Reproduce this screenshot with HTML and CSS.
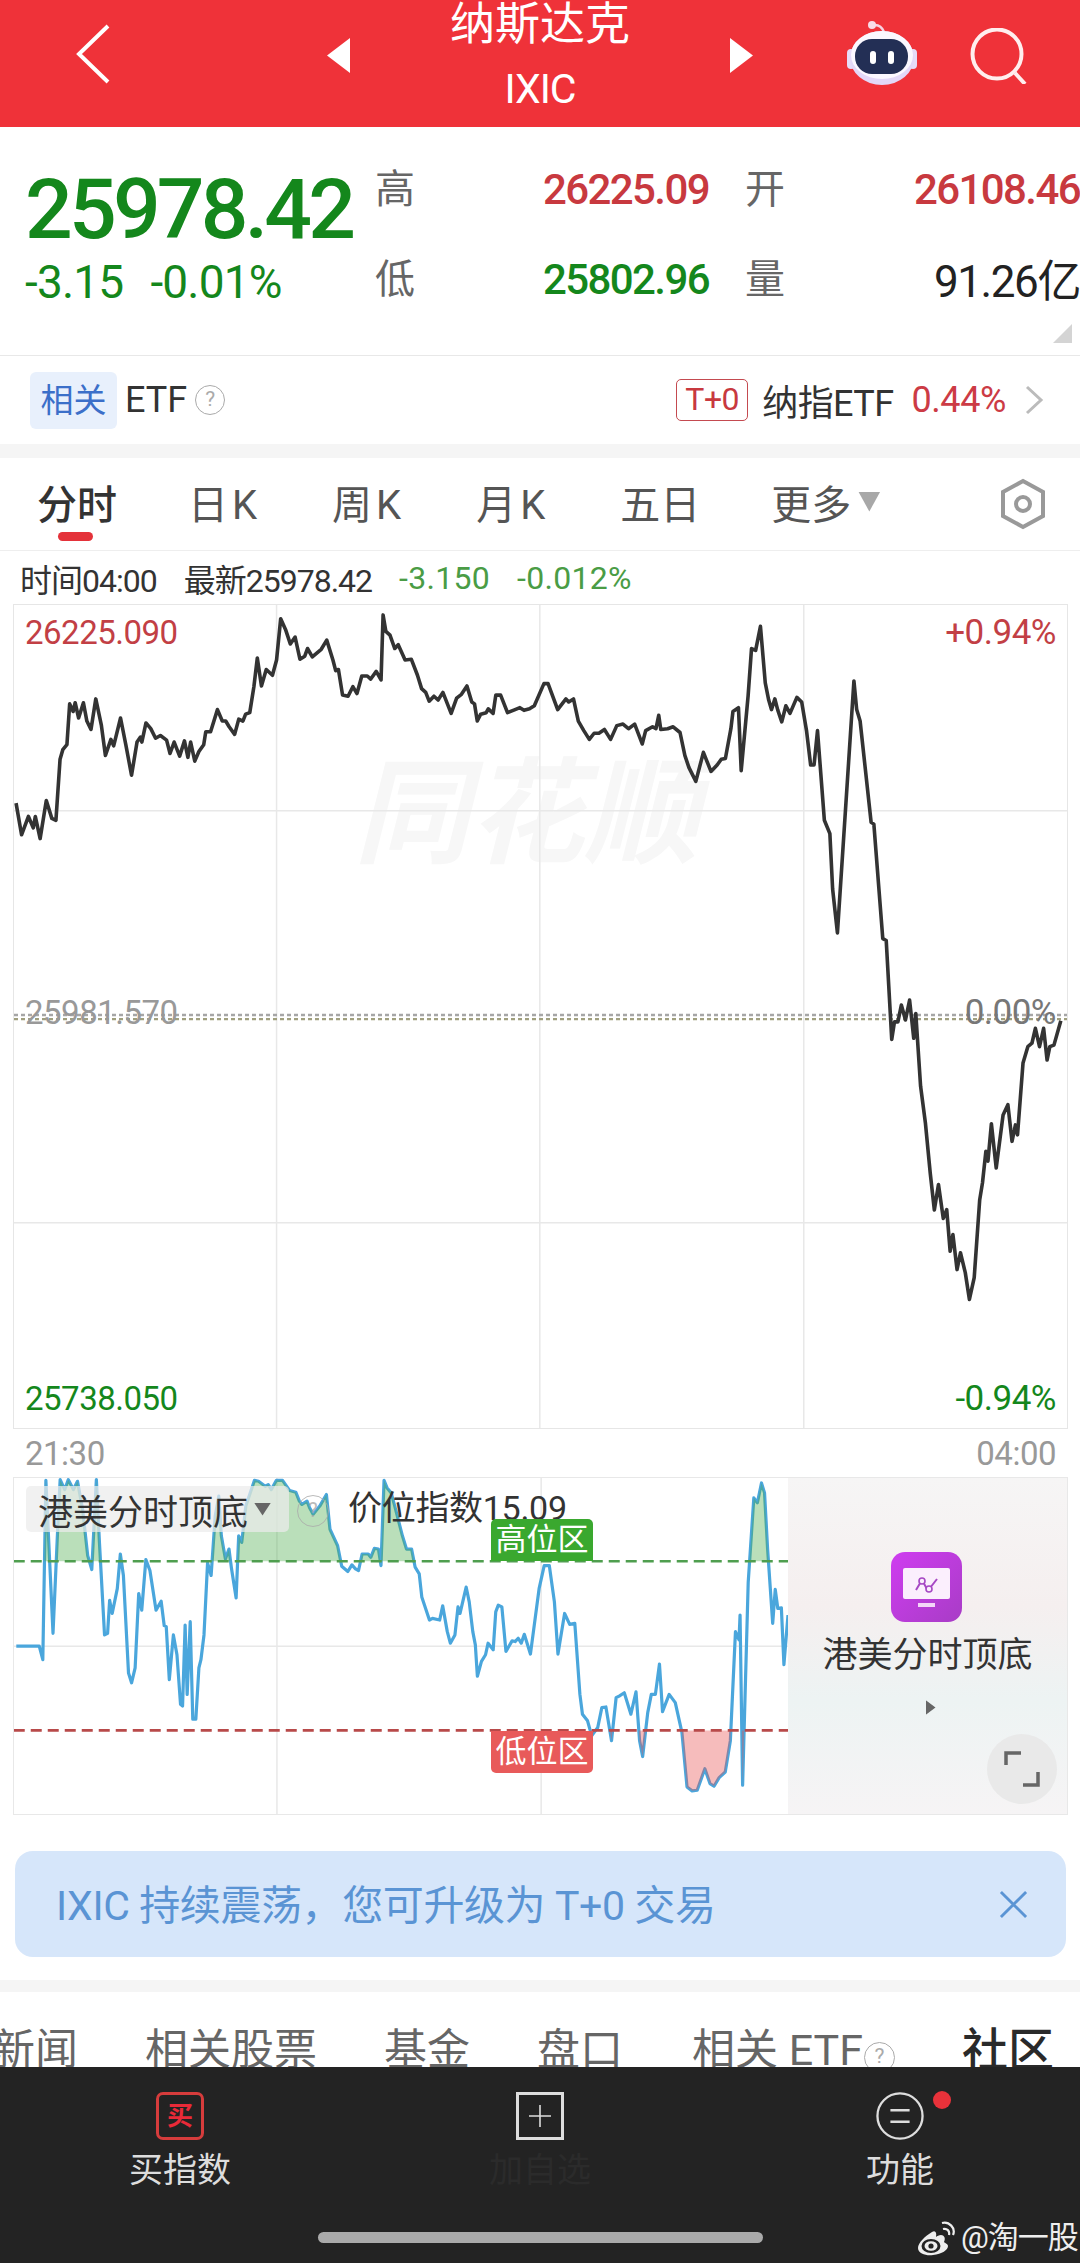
FILE: index.html
```html
<!DOCTYPE html>
<html lang="zh-CN">
    <head>
        <meta charset="UTF-8" />
        <meta name="viewport" content="width=device-width, initial-scale=1.0" />
        <title>纳斯达克 IXIC</title>

        <link rel="stylesheet" href="styles.css">
    </head>

    <body>
        <div class="screen">
            <header class="topbar">
                <svg class="back_icon" viewBox="0 0 34 60"><path d="M32 2 L3 30 L32 58" /></svg>
                <div class="tri tri_left"></div>
                <div class="nav_title">
                    <div class="nav_name">纳斯达克</div>
                    <div class="nav_code">IXIC</div>
                </div>
                <div class="tri tri_right"></div>
                <svg class="robot_icon" viewBox="0 0 70 64">
                    <path d="M28 4 C32 4 35 6 37 11" fill="none" stroke="#f7d3e2" stroke-width="2.5" />
                    <circle cx="25" cy="4" r="4" fill="#f9dce8" />
                    <rect x="0" y="28" width="8" height="20" rx="4" fill="#e6dcf8" />
                    <rect x="62" y="28" width="8" height="20" rx="4" fill="#e6dcf8" />
                    <ellipse cx="35" cy="37" rx="32" ry="27" fill="#e3d8f8" />
                    <ellipse cx="35" cy="34" rx="31" ry="24" fill="#fbf8ff" />
                    <rect x="8" y="18" width="53" height="35" rx="17" fill="#232f55" />
                    <rect x="23" y="30" width="6" height="13" rx="3" fill="#fff" />
                    <rect x="41" y="30" width="6" height="13" rx="3" fill="#fff" />
                </svg>
                <svg class="search_icon" viewBox="0 0 58 56">
                    <circle cx="27" cy="26" r="24.5" />
                    <path d="M45 45 L55 56" />
                </svg>
            </header>

            <section class="quote">
                <div class="quote_main">
                    <div class="price">25978.42</div>
                    <div class="change">
                        <span>-3.15</span>
                        <span>-0.01%</span>
                    </div>
                </div>
                <div class="stats">
                    <span class="stat_label">高</span>
                    <span class="stat_val up">26225.09</span>
                    <span class="stat_label">开</span>
                    <span class="stat_val up">26108.46</span>
                    <span class="stat_label">低</span>
                    <span class="stat_val down">25802.96</span>
                    <span class="stat_label">量</span>
                    <span class="stat_val stat_end">91.26亿</span>
                </div>
                <div class="corner"></div>
            </section>

            <section class="etf_row">
                <span class="etf_tag">相关</span>
                <span class="etf_name">ETF</span>
                <span class="help help_etf">?</span>
                <div class="etf_right">
                    <span class="t0_tag">T+0</span>
                    <span class="etf_fund">纳指ETF</span>
                    <span class="etf_pct">0.44%</span>
                    <svg class="etf_arrow" viewBox="0 0 19 30"><path d="M2 2 L16 15 L2 28" /></svg>
                </div>
            </section>
            <div class="band"></div>

            <nav class="tabs">
                <span class="tab tab_active">分时</span>
                <span class="tab tab_k">日K</span>
                <span class="tab tab_k">周K</span>
                <span class="tab tab_k">月K</span>
                <span class="tab">五日</span>
                <span class="tab tab_more">更多<i class="more_arrow"></i></span>
                <svg class="hex_icon" viewBox="0 0 46 52">
                    <path d="M23 3 L43 14 L43 38 L23 49 L3 38 L3 14 Z" />
                    <circle cx="23" cy="26" r="7" />
                </svg>
            </nav>

            <div class="info_row">
                <span>时间04:00</span>
                <span>最新25978.42</span>
                <span class="info_down">-3.150</span>
                <span class="info_down">-0.012%</span>
            </div>

            <div class="chart">
                <div class="watermark">同花顺</div>
                <svg class="chart_svg" viewBox="19 376 1532 2156" preserveAspectRatio="none">
                    <g class="grid">
                        <line x1="401" y1="376" x2="401" y2="2532" />
                        <line x1="784" y1="376" x2="784" y2="2532" />
                        <line x1="1168" y1="376" x2="1168" y2="2532" />
                        <line x1="19" y1="915" x2="1551" y2="915" />
                        <line x1="19" y1="1994" x2="1551" y2="1994" />
                    </g>
                    <line class="dot_a" x1="19" y1="1450" x2="1551" y2="1450" />
                    <line class="dot_b" x1="19" y1="1461" x2="1551" y2="1461" />
                    <polyline class="price_line" points="22,895 30,978 40,930 47,960 50,930 57,988 66,888 74,935 80,940 86,780 90,755 96,742 100,635 105,655 108,632 113,672 120,632 125,680 131,702 138,622 146,690 152,770 160,728 164,745 174,672 182,745 190,822 198,735 203,722 205,735 211,685 218,700 225,725 232,718 241,730 246,765 252,735 260,772 267,732 272,775 276,735 282,785 288,760 295,742 298,708 305,708 315,650 322,680 327,680 332,695 340,715 346,675 352,680 356,662 362,658 368,590 373,515 379,588 386,545 395,560 401,520 407,412 414,440 421,478 428,460 435,518 442,510 446,490 453,512 466,492 474,468 483,520 487,548 491,545 497,612 505,615 512,590 518,608 525,562 533,562 538,570 546,550 553,572 556,402 560,445 566,455 573,490 578,480 588,520 597,518 606,560 612,595 618,605 623,628 630,615 636,625 643,605 655,660 663,620 670,610 678,588 685,630 689,635 693,680 698,662 706,658 709,648 716,660 720,612 727,612 737,658 748,650 755,645 761,652 769,648 776,640 790,582 796,582 810,650 822,622 826,630 833,622 840,680 848,705 856,728 863,712 870,712 878,702 887,728 896,692 905,688 913,700 922,688 933,740 938,705 948,695 953,700 957,665 960,702 970,700 978,695 988,710 995,770 1001,802 1011,838 1022,762 1033,812 1042,795 1048,780 1054,778 1062,700 1065,655 1073,645 1077,810 1087,615 1092,490 1098,495 1105,432 1112,580 1117,625 1121,650 1126,622 1130,650 1136,682 1142,640 1148,660 1158,618 1165,630 1172,705 1178,795 1183,795 1188,705 1198,940 1206,975 1210,1120 1217,1235 1241,575 1245,650 1250,680 1266,945 1270,950 1283,1250 1288,1255 1296,1514 1300,1468 1305,1468 1310,1424 1316,1463 1322,1411 1328,1511 1331,1446 1338,1637 1345,1733 1352,1864 1358,1961 1364,1894 1371,1983 1376,1960 1381,2069 1385,2025 1391,2117 1396,2073 1403,2125 1409,2195 1416,2138 1424,1934 1428,1890 1433,1807 1436,1833 1441,1735 1448,1851 1458,1712 1465,1685 1471,1781 1476,1738 1479,1764 1487,1576 1494,1533 1500,1524 1505,1485 1511,1533 1517,1485 1522,1568 1526,1533 1532,1529 1542,1465" vector-effect="non-scaling-stroke" />
                </svg>
                <span class="axis axis_tl up_soft">26225.090</span>
                <span class="axis axis_tr up_soft">+0.94%</span>
                <span class="axis axis_ml">25981.570</span>
                <span class="axis axis_mr">0.00%</span>
                <span class="axis axis_bl down">25738.050</span>
                <span class="axis axis_br down">-0.94%</span>
            </div>

            <div class="time_axis">
                <span>21:30</span>
                <span>04:00</span>
            </div>

            <div class="sub_chart">
                <div class="sub_plot">
                    <svg class="sub_svg" viewBox="25.5 105 1517.5 1017" preserveAspectRatio="none">
                        <defs>
                            <clipPath id="aboveHigh"><rect x="0" y="0" width="1600" height="357" /></clipPath>
                            <clipPath id="belowLow"><rect x="0" y="869" width="1600" height="400" /></clipPath>
                            <polyline id="indexLine" points="30,614 75,614 82,655 88,112 102,575 112,230 116,110 125,140 132,110 142,140 150,115 160,200 170,340 178,382 187,110 193,300 203,580 209,575 213,475 218,515 228,440 234,335 240,400 250,695 256,725 263,680 270,455 276,505 284,352 292,385 304,505 314,478 320,552 324,555 330,715 338,580 345,640 352,790 356,795 361,550 365,760 371,540 376,835 382,835 388,680 392,655 398,580 405,362 412,400 420,220 427,160 432,280 440,350 447,320 452,380 461,468 466,280 472,300 480,190 497,112 505,115 518,130 524,125 530,140 540,112 552,112 566,143 578,148 585,175 590,185 600,175 605,195 612,215 625,190 638,155 645,260 660,310 668,372 680,388 688,368 695,380 701,385 708,335 720,335 725,345 732,318 740,320 745,370 751,112 757,135 765,150 772,190 787,280 795,320 805,320 812,375 820,395 825,465 840,535 846,530 860,535 866,492 875,570 881,605 890,580 896,495 900,515 912,435 918,480 925,570 930,610 934,705 942,660 950,640 955,605 965,625 970,510 975,490 982,495 990,630 1002,598 1008,600 1014,590 1020,605 1026,578 1038,638 1055,440 1065,370 1075,370 1085,480 1092,638 1105,515 1115,548 1125,545 1135,760 1140,820 1150,840 1158,885 1170,860 1178,800 1186,798 1197,900 1206,770 1212,765 1222,755 1235,820 1245,752 1252,900 1258,948 1268,815 1275,760 1283,760 1291,668 1297,812 1310,760 1322,785 1335,875 1345,1040 1355,1052 1365,1050 1380,985 1390,1030 1398,1038 1408,1012 1420,995 1430,900 1440,570 1447,595 1449,520 1454,1035 1465,420 1476,165 1483,180 1491,120 1497,150 1503,320 1513,545 1518,442 1523,500 1530,498 1535,670 1543,520" vector-effect="non-scaling-stroke" />
                        </defs>
                        <g class="grid">
                            <line x1="541" y1="105" x2="541" y2="1122" />
                            <line x1="1059" y1="105" x2="1059" y2="1122" />
                            <line x1="25" y1="614" x2="1543" y2="614" />
                        </g>
                        <use href="#indexLine" class="index_line" />
                        <use href="#indexLine" class="fill_high" clip-path="url(#aboveHigh)" />
                        <use href="#indexLine" class="fill_low" clip-path="url(#belowLow)" />
                        <line class="dash_high" x1="25" y1="357" x2="1543" y2="357" />
                        <line class="dash_low" x1="25" y1="869" x2="1543" y2="869" />
                    </svg>
                    <div class="indicator_pill">港美分时顶底<i class="pill_arrow"></i></div>
                    <span class="help help_pill">?</span>
                    <span class="indicator_val">价位指数15.09</span>
                    <span class="zone_tag zone_high">高位区</span>
                    <span class="zone_tag zone_low">低位区</span>
                </div>
                <aside class="promo">
                    <svg class="promo_icon" viewBox="0 0 71 70">
                        <defs>
                            <linearGradient id="promoBg" x1="0" y1="0" x2="1" y2="1">
                                <stop offset="0" stop-color="#cf3df0" />
                                <stop offset="1" stop-color="#a83cc6" />
                            </linearGradient>
                        </defs>
                        <rect width="71" height="70" rx="14" fill="url(#promoBg)" />
                        <rect x="12" y="16" width="47" height="31" rx="2" fill="#fbeffd" />
                        <rect x="27" y="51" width="17" height="4" fill="#f3d5f8" />
                        <path d="M25 38 L31 28 L36 37 L39 36 L46 27" fill="none" stroke="#a648c4" stroke-width="2" />
                        <circle cx="31" cy="29" r="3" fill="#fbeffd" stroke="#a648c4" stroke-width="1.6" />
                        <circle cx="38" cy="37" r="3" fill="#fbeffd" stroke="#a648c4" stroke-width="1.6" />
                    </svg>
                    <div class="promo_name">港美分时顶底</div>
                    <div class="promo_arrow"></div>
                    <div class="expand_btn">
                        <svg viewBox="0 0 36 36"><path d="M2 14 L2 2 L17 2 M34 21 L34 34 L19 34" /></svg>
                    </div>
                </aside>
            </div>

            <div class="notice">
                <span>IXIC 持续震荡，您可升级为 T+0 交易</span>
                <svg class="notice_close" viewBox="0 0 30 30"><path d="M2 2 L28 28 M28 2 L2 28" /></svg>
            </div>
            <div class="band band_low"></div>

            <nav class="news_tabs">
                <span>新闻</span>
                <span>相关股票</span>
                <span>基金</span>
                <span>盘口</span>
                <span class="news_etf">相关 ETF<span class="help help_news">?</span></span>
                <span class="news_active">社区</span>
            </nav>

            <footer class="bottom_bar">
                <div class="bar_items">
                    <div class="bar_item">
                        <div class="buy_icon">买</div>
                        <span class="bar_label">买指数</span>
                    </div>
                    <div class="bar_item">
                        <svg class="bar_svg" viewBox="0 0 48 48">
                            <rect x="1.5" y="1.5" width="45" height="45" fill="none" stroke="#ddd" stroke-width="3" />
                            <path d="M24 13 V35 M13 24 H35" stroke="#ddd" stroke-width="1.6" />
                        </svg>
                        <span class="bar_label bar_label_dim">加自选</span>
                    </div>
                    <div class="bar_item">
                        <svg class="bar_svg" viewBox="0 0 50 50">
                            <circle cx="25" cy="25" r="23.5" fill="none" stroke="#ddd" stroke-width="2.4" />
                            <path d="M15 19 H35 M15 31 H35" stroke="#ddd" stroke-width="2.4" />
                        </svg>
                        <span class="red_dot"></span>
                        <span class="bar_label">功能</span>
                    </div>
                </div>
                <div class="home_bar"></div>
                <div class="weibo_mark">
                    <svg class="weibo_icon" viewBox="0 0 38 35">
                        <path d="M14 11 C7 15 0 22 0 27 C0 33 9 35 15 34 C24 33 30 29 30 25 C30 23 27 22 26 21 C28 17 26 14 23 14 C21 14 19 15 18 16 C19 11 17 9 14 11 Z" fill="#eee" />
                        <ellipse cx="13" cy="25" rx="9.5" ry="7" fill="#232323" />
                        <ellipse cx="13" cy="25" rx="6.5" ry="4.8" fill="#eee" />
                        <circle cx="13" cy="25" r="2.6" fill="#232323" />
                        <path d="M25 8 C29 7 32 10 31 14 M24 2 C31 0 38 7 35 14" fill="none" stroke="#eee" stroke-width="2.2" />
                    </svg>
                    <span>@淘一股</span>
                </div>
            </footer>
        </div>
    </body>
</html>
```

FILE: styles.css
```css
* {
    box-sizing: border-box;
}

body {
    margin: 0;
    background-color: #fff;
    font-family: Roboto, "Noto Sans CJK SC", sans-serif;
    color: #333;
}

.screen {
    width: 1080px;
    height: 2263px;
    overflow: hidden;
    display: flex;
    flex-direction: column;
}

.up {
    color: #c8393f;
}
.up_soft {
    color: #c23f45;
}
.down {
    color: #14871c;
}

/* top bar */
.topbar {
    height: 127px;
    flex: none;
    padding-left: 76px;
    display: flex;
    align-items: center;
    background-color: #ef3239;
}
.back_icon {
    width: 34px;
    height: 60px;
    margin-top: -20px;
    fill: none;
    stroke: #fff;
    stroke-width: 4;
}
.tri {
    width: 23px;
    height: 35px;
    margin-top: -16px;
    background-color: #fff;
}
.tri_left {
    margin-left: 217px;
    clip-path: polygon(100% 0, 100% 100%, 0 50%);
}
.tri_right {
    clip-path: polygon(0 0, 100% 50%, 0 100%);
}
.nav_title {
    width: 380px;
    height: 127px;
    text-align: center;
    color: #fff;
}
.nav_name {
    height: 50px;
    line-height: 50px;
    font-size: 45px;
}
.nav_code {
    margin-top: 11px;
    line-height: 56px;
    font-size: 41px;
    letter-spacing: -1px;
}
.robot_icon {
    width: 70px;
    height: 64px;
    margin-left: 94px;
    margin-top: -22px;
}
.search_icon {
    width: 58px;
    height: 56px;
    margin-left: 53px;
    margin-top: -16px;
    fill: none;
    stroke: #ffeeee;
    stroke-width: 4;
}

/* quote block */
.quote {
    height: 228px;
    flex: none;
    display: flex;
    position: relative;
}
.quote_main {
    width: 375px;
    padding-left: 25px;
    padding-top: 43px;
    color: #14871c;
}
.price {
    line-height: 80px;
    font-size: 84px;
    font-weight: 500;
    letter-spacing: -3.8px;
    white-space: nowrap;
}
.change {
    margin-top: 7px;
    display: flex;
    gap: 27px;
    line-height: 50px;
    font-size: 46px;
    letter-spacing: -0.8px;
}
.stats {
    padding-top: 17px;
    display: grid;
    grid-template-columns: 168px 202px 169px 166px;
    grid-auto-rows: 90px;
    align-items: center;
}
.stat_label {
    margin-top: -7px;
    font-size: 40px;
    color: #666;
}
.stat_val {
    font-size: 42px;
    font-weight: 500;
    letter-spacing: -1.6px;
    white-space: nowrap;
}
.stat_end {
    margin-top: -3px;
    text-align: right;
    font-size: 44px;
    font-weight: 400;
    letter-spacing: -1.4px;
    color: #222;
}
.corner {
    position: absolute;
    right: 8px;
    bottom: 12px;
    width: 19px;
    height: 19px;
    background-color: #d4d4d4;
    clip-path: polygon(100% 0, 100% 100%, 0 100%);
}

/* related etf */
.etf_row {
    height: 89px;
    flex: none;
    padding: 0 36px 0 30px;
    display: flex;
    align-items: center;
    border-top: 1px solid #e8e8e8;
}
.etf_tag {
    width: 87px;
    height: 57px;
    line-height: 57px;
    text-align: center;
    border-radius: 6px;
    font-size: 33px;
    color: #3b6fc9;
    background-color: #e8f0fc;
}
.etf_name {
    margin-left: 8px;
    font-size: 36px;
}
.help {
    display: inline-block;
    border: 1.5px solid #aaa;
    border-radius: 50%;
    text-align: center;
    color: #aaa;
}
.help_etf {
    width: 30px;
    height: 30px;
    line-height: 27px;
    margin-left: 8px;
    font-size: 21px;
}
.etf_right {
    margin-left: auto;
    display: flex;
    align-items: center;
}
.t0_tag {
    width: 72px;
    height: 42px;
    line-height: 39px;
    text-align: center;
    border: 1px solid #c44a50;
    border-radius: 5px;
    font-size: 32px;
    letter-spacing: -0.5px;
    color: #c8393f;
}
.etf_fund {
    margin-left: 14px;
    font-size: 36px;
    letter-spacing: -0.6px;
}
.etf_pct {
    margin-left: 18px;
    font-size: 36px;
    letter-spacing: -0.4px;
    color: #cc3b45;
}
.etf_arrow {
    width: 19px;
    height: 30px;
    margin-left: 19px;
    fill: none;
    stroke: #bbb;
    stroke-width: 3;
}

.band {
    height: 14px;
    flex: none;
    background-color: #f5f5f5;
}

/* period tabs */
.tabs {
    height: 93px;
    flex: none;
    padding-left: 37px;
    padding-bottom: 5px;
    display: flex;
    align-items: center;
    gap: 71px;
    border-bottom: 1px solid #eee;
    position: relative;
}
.tab {
    font-size: 40px;
    color: #555;
    white-space: nowrap;
}
.tab_k {
    letter-spacing: 4px;
}
.tab_active {
    color: #333;
    font-weight: 500;
    position: relative;
}
.tab_active::after {
    content: "";
    position: absolute;
    left: 21px;
    top: 59px;
    width: 35px;
    height: 9px;
    border-radius: 5px;
    background-color: #e4323a;
}
.tab_more {
    display: flex;
    align-items: center;
    gap: 7px;
}
.more_arrow {
    width: 22px;
    height: 20px;
    background-color: #a8a8a8;
    clip-path: polygon(0 0, 100% 0, 50% 100%);
}
.hex_icon {
    width: 46px;
    height: 52px;
    position: absolute;
    left: 1000px;
    top: 20px;
    fill: none;
    stroke: #999;
    stroke-width: 4;
}

.info_row {
    height: 53px;
    flex: none;
    padding-left: 20px;
    display: flex;
    align-items: center;
    gap: 27px;
    font-size: 32px;
    letter-spacing: -1px;
}
.info_down {
    letter-spacing: 0.3px;
    color: #4a9c45;
}

/* main chart */
.chart {
    width: 1055px;
    height: 825px;
    margin-left: 13px;
    flex: none;
    border: 1px solid #e6e6e6;
    position: relative;
}
.chart_svg {
    display: block;
    width: 100%;
    height: 100%;
    position: relative;
    fill: none;
}
.grid line {
    stroke: #e8e8e8;
    stroke-width: 1.5;
    vector-effect: non-scaling-stroke;
}
.dot_a,
.dot_b {
    stroke-width: 2.4;
    stroke-dasharray: 4 3;
    vector-effect: non-scaling-stroke;
}
.dot_a {
    stroke: #a6a6a6;
}
.dot_b {
    stroke: #a09f7e;
}
.price_line {
    fill: none;
    stroke: #333;
    stroke-width: 3.6;
    stroke-linejoin: round;
}
.watermark {
    position: absolute;
    left: 340px;
    top: 150px;
    font-size: 115px;
    line-height: 120px;
    font-weight: 700;
    font-style: italic;
    color: #f7f7f7;
    white-space: nowrap;
}
.axis {
    position: absolute;
    line-height: 40px;
    font-size: 33px;
    letter-spacing: -0.5px;
}
.axis_tr,
.axis_mr,
.axis_br {
    font-size: 35px;
}
.axis_tl {
    left: 11px;
    top: 8px;
}
.axis_tr {
    right: 11px;
    top: 8px;
}
.axis_ml {
    left: 11px;
    top: 388px;
    color: #999;
}
.axis_mr {
    right: 11px;
    top: 388px;
    color: #777;
}
.axis_bl {
    left: 11px;
    top: 774px;
}
.axis_br {
    right: 11px;
    top: 774px;
}

.time_axis {
    height: 48px;
    flex: none;
    padding: 0 24px 0 25px;
    display: flex;
    align-items: center;
    justify-content: space-between;
    font-size: 33px;
    letter-spacing: -0.5px;
    color: #999;
}

/* indicator chart */
.sub_chart {
    width: 1055px;
    height: 338px;
    margin-left: 13px;
    flex: none;
    display: flex;
    border: 1px solid #e8e8e8;
}
.sub_plot {
    width: 774px;
    flex: none;
    position: relative;
}
.sub_svg {
    display: block;
    width: 100%;
    height: 100%;
}
.index_line {
    fill: none;
    stroke: #4aa6dc;
    stroke-width: 3.2;
    stroke-linejoin: round;
}
.fill_high {
    fill: rgb(74 172 74 / 0.38);
    stroke: none;
}
.fill_low {
    fill: rgb(232 80 80 / 0.38);
    stroke: none;
}
.dash_high,
.dash_low {
    stroke-width: 2.6;
    stroke-dasharray: 11 6;
    vector-effect: non-scaling-stroke;
}
.dash_high {
    stroke: #4f9e4f;
}
.dash_low {
    stroke: #b84a4a;
}
.indicator_pill {
    position: absolute;
    left: 12px;
    top: 8px;
    width: 263px;
    height: 46px;
    padding-left: 12px;
    display: flex;
    align-items: center;
    gap: 6px;
    border-radius: 5px;
    font-size: 35px;
    white-space: nowrap;
    background-color: rgb(236 236 236 / 0.72);
}
.pill_arrow {
    width: 17px;
    height: 13px;
    background-color: #666;
    clip-path: polygon(0 0, 100% 0, 50% 100%);
}
.help_pill {
    position: absolute;
    left: 283px;
    top: 17px;
    width: 32px;
    height: 32px;
    line-height: 28px;
    font-size: 20px;
    opacity: 0.8;
}
.indicator_val {
    position: absolute;
    left: 334px;
    top: 6px;
    line-height: 48px;
    font-size: 34px;
    letter-spacing: -0.3px;
    white-space: nowrap;
}
.zone_tag {
    position: absolute;
    left: 477px;
    width: 102px;
    height: 42px;
    line-height: 42px;
    text-align: center;
    font-size: 31px;
    color: #fff;
}
.zone_high {
    top: 41px;
    background-color: #3aa82f;
    border-radius: 5px 5px 0 0;
}
.zone_low {
    top: 253px;
    background-color: #e85a5a;
    border-radius: 0 0 5px 5px;
}

/* promo side panel */
.promo {
    flex: 1;
    padding-top: 74px;
    display: flex;
    flex-direction: column;
    align-items: center;
    position: relative;
    background-image: linear-gradient(180deg, #f6f5f5 0%, #f5efef 38%, #edf3f3 66%, #f6f4f5 100%);
}
.promo_icon {
    width: 71px;
    height: 70px;
    margin-left: -3px;
}
.promo_name {
    margin-top: 10px;
    line-height: 48px;
    font-size: 35px;
    white-space: nowrap;
}
.promo_arrow {
    width: 10px;
    height: 15px;
    margin-top: 20px;
    margin-left: 6px;
    background-color: #666;
    clip-path: polygon(0 0, 100% 50%, 0 100%);
}
.expand_btn {
    position: absolute;
    right: 10px;
    bottom: 10px;
    width: 70px;
    height: 70px;
    border-radius: 50%;
    display: flex;
    align-items: center;
    justify-content: center;
    background-color: #e9e9e9;
}
.expand_btn svg {
    width: 36px;
    height: 36px;
    fill: none;
    stroke: #666;
    stroke-width: 3.5;
}

/* notice */
.notice {
    width: 1051px;
    height: 106px;
    margin: 36px 0 0 15px;
    padding: 0 38px 4px 41px;
    flex: none;
    display: flex;
    align-items: center;
    justify-content: space-between;
    border-radius: 18px;
    font-size: 41px;
    letter-spacing: -0.4px;
    color: #5a94d4;
    background-color: #d6e6fa;
}
.notice_close {
    width: 29px;
    height: 29px;
    margin-top: 4px;
    fill: none;
    stroke: #5a94d4;
    stroke-width: 3;
}
.band_low {
    height: 12px;
    margin-top: 23px;
}

/* news tabs, cut by the bottom bar */
.news_tabs {
    height: 75px;
    flex: none;
    margin-left: -8px;
    padding: 28px 30px 0 0;
    display: flex;
    gap: 67px;
    overflow: hidden;
    font-size: 43px;
    line-height: 60px;
    color: #666;
    white-space: nowrap;
}
.news_etf {
    margin-left: 2px;
}
.help_news {
    width: 31px;
    height: 31px;
    line-height: 27px;
    margin-left: 1px;
    vertical-align: 2px;
    font-size: 21px;
}
.news_active {
    margin-left: auto;
    font-size: 46px;
    font-weight: 500;
    color: #2a2a2a;
}

/* bottom bar */
.bottom_bar {
    flex: 1;
    display: flex;
    flex-direction: column;
    position: relative;
    background-color: #232323;
}
.bar_items {
    height: 165px;
    padding-top: 25px;
    display: flex;
}
.bar_item {
    width: 360px;
    display: flex;
    flex-direction: column;
    align-items: center;
    position: relative;
}
.bar_label {
    margin-top: 5px;
    line-height: 50px;
    font-size: 34px;
    color: #ddd;
}
.bar_label_dim {
    color: #2b2b2b;
}
.bar_svg {
    width: 48px;
    height: 48px;
}
.buy_icon {
    width: 48px;
    height: 48px;
    line-height: 42px;
    text-align: center;
    border: 3px solid #d63c3c;
    border-radius: 7px;
    font-size: 26px;
    font-weight: 700;
    color: #ea2a38;
}
.red_dot {
    position: absolute;
    left: 213px;
    top: -1px;
    width: 18px;
    height: 18px;
    border-radius: 50%;
    background-color: #e8323a;
}
.home_bar {
    width: 445px;
    height: 11px;
    margin-left: 318px;
    border-radius: 6px;
    background-color: #aaa;
}
.weibo_mark {
    position: absolute;
    left: 918px;
    top: 153px;
    display: flex;
    align-items: center;
    gap: 5px;
    line-height: 36px;
    font-size: 31px;
    letter-spacing: -1px;
    color: #eee;
    white-space: nowrap;
}
.weibo_icon {
    width: 38px;
    height: 35px;
}
```
